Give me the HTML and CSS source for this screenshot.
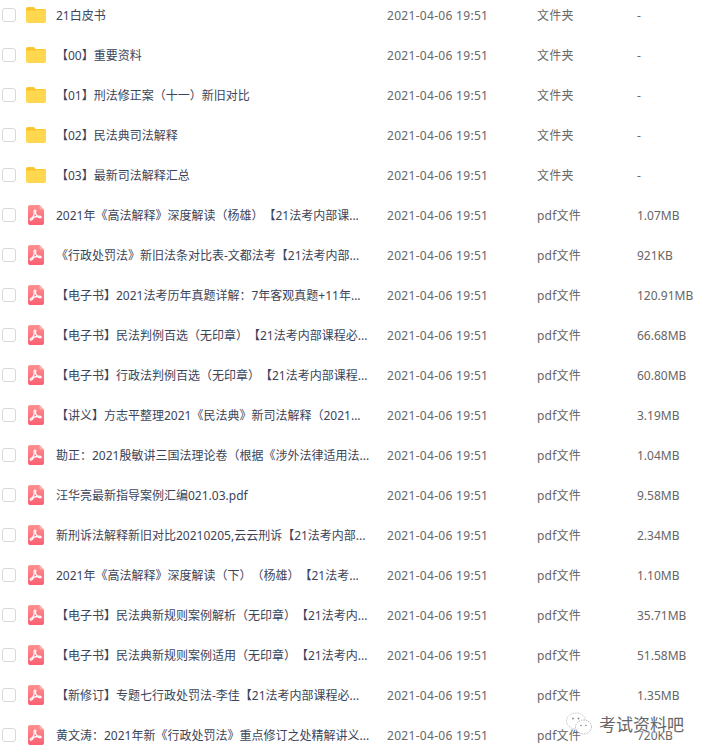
FILE: index.html
```html
<!doctype html>
<html lang="en">
<head>
    <meta charset="UTF-8">
    <title>文件列表</title>
    <link rel="stylesheet" href="styles.css">
</head>
<body>
<svg class="defs" width="0" height="0">
    <defs>
        <linearGradient id="pdfFill" x1="0" y1="0" x2="0" y2="1">
            <stop offset="0" stop-color="#ff8f8f"/>
            <stop offset="1" stop-color="#fc5f73"/>
        </linearGradient>
        <symbol id="folder" viewBox="0 0 20 16">
            <path d="M0 2C0 .9.9 0 2 0h5c.7 0 1.200.3 1.600.8L9.600 2H18c1.100 0 2 .9 2 2v2H0z" fill="#fbc52d"/>
            <path d="M0 4.600c0-.6.400-1 1-1h8.200L10.600 3H18c1.100 0 2 .9 2 2v9c0 1.100-.9 2-2 2H2c-1.100 0-2-.9-2-2z" fill="#ffd84f"/>
        </symbol>
        <symbol id="pdf" viewBox="0 0 16 20">
            <path d="M2 0h9.500L16 4.500V18c0 1.100-.9 2-2 2H2c-1.100 0-2-.9-2-2V2C0 .9.900 0 2 0z" fill="url(#pdfFill)"/>
            <path d="M11.500 0L16 4.500h-3c-.8 0-1.500-.7-1.500-1.500z" fill="#ffb3b3"/>
            <path d="M7.300 5.200c.6 0 .7.900.2 3 .5 1.200 1.200 2.200 2 3 1.500-.2 3.700-.2 3.700.9 0 1-1.900.8-4.100-.7-1.300.3-2.500.6-3.700 1.200-1.100 2-2.200 3-2.900 2.500-.8-.6.300-2 2.400-3.100.6-1.100 1-2.300 1.400-3.600-.5-1.600-.5-3.200 1-3.200z" fill="none" stroke="#fff" stroke-width="1.200" stroke-linejoin="round"/>
        </symbol>
    </defs>
</svg>

<div class="list">
    <div class="row"><span class="check"></span><svg class="ico-folder"><use href="#folder"/></svg><span class="name">21白皮书</span><span class="date">2021-04-06 19:51</span><span class="type">文件夹</span><span class="size">-</span></div>
    <div class="row"><span class="check"></span><svg class="ico-folder"><use href="#folder"/></svg><span class="name">【00】重要资料</span><span class="date">2021-04-06 19:51</span><span class="type">文件夹</span><span class="size">-</span></div>
    <div class="row"><span class="check"></span><svg class="ico-folder"><use href="#folder"/></svg><span class="name">【01】刑法修正案（十一）新旧对比</span><span class="date">2021-04-06 19:51</span><span class="type">文件夹</span><span class="size">-</span></div>
    <div class="row"><span class="check"></span><svg class="ico-folder"><use href="#folder"/></svg><span class="name">【02】民法典司法解释</span><span class="date">2021-04-06 19:51</span><span class="type">文件夹</span><span class="size">-</span></div>
    <div class="row"><span class="check"></span><svg class="ico-folder"><use href="#folder"/></svg><span class="name">【03】最新司法解释汇总</span><span class="date">2021-04-06 19:51</span><span class="type">文件夹</span><span class="size">-</span></div>
    <div class="row"><span class="check"></span><svg class="ico-pdf"><use href="#pdf"/></svg><span class="name">2021年《高法解释》深度解读（杨雄）【21法考内部课...</span><span class="date">2021-04-06 19:51</span><span class="type">pdf文件</span><span class="size">1.07MB</span></div>
    <div class="row"><span class="check"></span><svg class="ico-pdf"><use href="#pdf"/></svg><span class="name">《行政处罚法》新旧法条对比表-文都法考【21法考内部...</span><span class="date">2021-04-06 19:51</span><span class="type">pdf文件</span><span class="size">921KB</span></div>
    <div class="row"><span class="check"></span><svg class="ico-pdf"><use href="#pdf"/></svg><span class="name">【电子书】2021法考历年真题详解：7年客观真题+11年...</span><span class="date">2021-04-06 19:51</span><span class="type">pdf文件</span><span class="size">120.91MB</span></div>
    <div class="row"><span class="check"></span><svg class="ico-pdf"><use href="#pdf"/></svg><span class="name">【电子书】民法判例百选（无印章）【21法考内部课程必...</span><span class="date">2021-04-06 19:51</span><span class="type">pdf文件</span><span class="size">66.68MB</span></div>
    <div class="row"><span class="check"></span><svg class="ico-pdf"><use href="#pdf"/></svg><span class="name">【电子书】行政法判例百选（无印章）【21法考内部课程...</span><span class="date">2021-04-06 19:51</span><span class="type">pdf文件</span><span class="size">60.80MB</span></div>
    <div class="row"><span class="check"></span><svg class="ico-pdf"><use href="#pdf"/></svg><span class="name">【讲义】方志平整理2021《民法典》新司法解释（2021...</span><span class="date">2021-04-06 19:51</span><span class="type">pdf文件</span><span class="size">3.19MB</span></div>
    <div class="row"><span class="check"></span><svg class="ico-pdf"><use href="#pdf"/></svg><span class="name">勘正：2021殷敏讲三国法理论卷（根据《涉外法律适用法...</span><span class="date">2021-04-06 19:51</span><span class="type">pdf文件</span><span class="size">1.04MB</span></div>
    <div class="row"><span class="check"></span><svg class="ico-pdf"><use href="#pdf"/></svg><span class="name">汪华亮最新指导案例汇编021.03.pdf</span><span class="date">2021-04-06 19:51</span><span class="type">pdf文件</span><span class="size">9.58MB</span></div>
    <div class="row"><span class="check"></span><svg class="ico-pdf"><use href="#pdf"/></svg><span class="name">新刑诉法解释新旧对比20210205,云云刑诉【21法考内部...</span><span class="date">2021-04-06 19:51</span><span class="type">pdf文件</span><span class="size">2.34MB</span></div>
    <div class="row"><span class="check"></span><svg class="ico-pdf"><use href="#pdf"/></svg><span class="name">2021年《高法解释》深度解读（下）（杨雄）【21法考...</span><span class="date">2021-04-06 19:51</span><span class="type">pdf文件</span><span class="size">1.10MB</span></div>
    <div class="row"><span class="check"></span><svg class="ico-pdf"><use href="#pdf"/></svg><span class="name">【电子书】民法典新规则案例解析（无印章）【21法考内...</span><span class="date">2021-04-06 19:51</span><span class="type">pdf文件</span><span class="size">35.71MB</span></div>
    <div class="row"><span class="check"></span><svg class="ico-pdf"><use href="#pdf"/></svg><span class="name">【电子书】民法典新规则案例适用（无印章）【21法考内...</span><span class="date">2021-04-06 19:51</span><span class="type">pdf文件</span><span class="size">51.58MB</span></div>
    <div class="row"><span class="check"></span><svg class="ico-pdf"><use href="#pdf"/></svg><span class="name">【新修订】专题七行政处罚法-李佳【21法考内部课程必...</span><span class="date">2021-04-06 19:51</span><span class="type">pdf文件</span><span class="size">1.35MB</span></div>
    <div class="row"><span class="check"></span><svg class="ico-pdf"><use href="#pdf"/></svg><span class="name">黄文涛：2021年新《行政处罚法》重点修订之处精解讲义...</span><span class="date">2021-04-06 19:51</span><span class="type">pdf文件</span><span class="size">720KB</span></div>
</div>

<div class="mark">
    <svg class="mark-ico" viewBox="0 0 28 24" width="28" height="24">
        <ellipse cx="11" cy="9" rx="9.500" ry="8" fill="#fff" fill-opacity=".7" stroke="#aaa" stroke-width=".7" stroke-dasharray="1.500 1"/>
        <ellipse cx="18.500" cy="15" rx="8" ry="7" fill="#fff" fill-opacity=".85" stroke="#999" stroke-width=".7" stroke-dasharray="1.500 1"/>
        <circle cx="8" cy="6.500" r=".9" fill="#888"/>
        <circle cx="13.500" cy="6.500" r=".9" fill="#888"/>
        <circle cx="16" cy="13.500" r=".8" fill="#888"/>
        <circle cx="21" cy="13.500" r=".8" fill="#888"/>
    </svg>
    <span class="mark-text">考试资料吧</span>
</div>
</body>
</html>
```

FILE: styles.css
```css
*{
    margin:0;
    padding:0;
    box-sizing:border-box;
}
html,body{
    background:#fff;
}
body{
    width:706px;
    height:754px;
    overflow:hidden;
    position:relative;
    font-family:"Noto Sans","Noto Sans CJK SC",sans-serif;
    font-size:12px;
    text-spacing-trim:space-all;
}
.defs{
    position:absolute;
}
.list{
    margin-top:-5px;
}
.row{
    height:40px;
    display:flex;
    align-items:center;
    white-space:nowrap;
}
.check{
    width:14px;
    height:14px;
    margin-left:2px;
    border:1px solid #d9d9d9;
    border-radius:3px;
    background:#fff;
    flex:none;
}
.ico-folder{
    width:20px;
    height:16px;
    margin-left:10px;
    flex:none;
}
.ico-pdf{
    width:16px;
    height:20px;
    margin-left:12px;
    flex:none;
}
.ico-folder + .name{
    margin-left:10px;
}
.ico-pdf + .name{
    margin-left:12px;
}
.name{
    width:331px;
    color:#3b4459;
    flex:none;
}
.date{
    width:150px;
    color:#666;
    letter-spacing:.3px;
    flex:none;
}
.type{
    width:100px;
    color:#666;
    letter-spacing:.2px;
    flex:none;
}
.size{
    color:#666;
}
.mark{
    position:absolute;
    left:565px;
    top:711px;
    display:flex;
    align-items:center;
    gap:6px;
}
.mark-text{
    font-size:17px;
    color:#666;
    text-shadow:0 0 2px #fff,0 0 2px #fff,0 0 3px #fff;
}
```
